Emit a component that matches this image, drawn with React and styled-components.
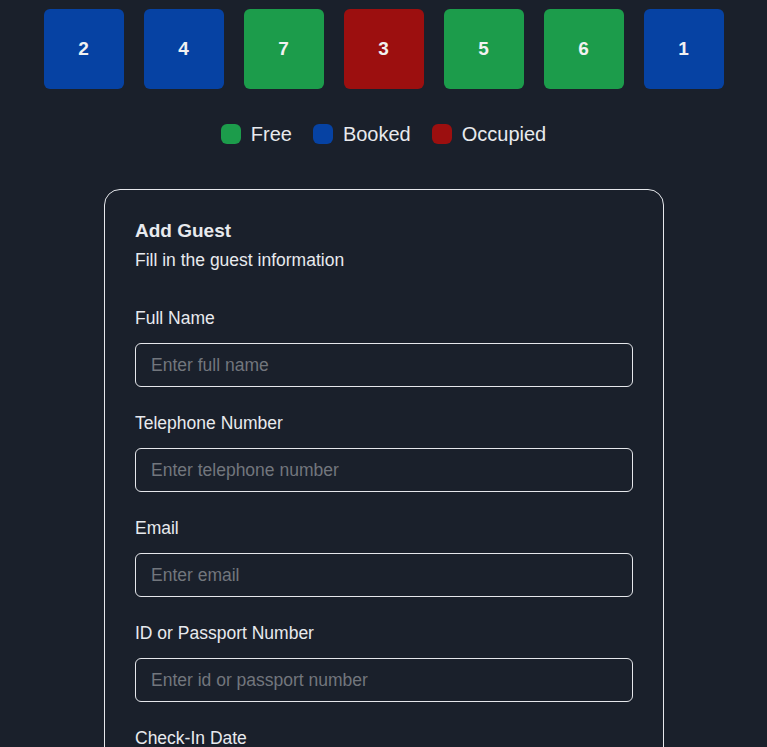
import React from 'react'
import styled, { createGlobalStyle } from 'styled-components'

const GlobalStyle = createGlobalStyle`
    html, body {
        margin: 0;
        padding: 0;
        background-color: #1a202b;
        font-family: "Liberation Sans", Arial, sans-serif;
        color: #e8eaee;
    }
`;

const colors = {
    free: '#1c9c4b',
    booked: '#0642a3',
    occupied: '#9c0f0f',
}

const rooms = [
    { number: 2, status: 'booked' },
    { number: 4, status: 'booked' },
    { number: 7, status: 'free' },
    { number: 3, status: 'occupied' },
    { number: 5, status: 'free' },
    { number: 6, status: 'free' },
    { number: 1, status: 'booked' },
]

const fields = [
    { label: 'Full Name', placeholder: 'Enter full name' },
    { label: 'Telephone Number', placeholder: 'Enter telephone number' },
    { label: 'Email', placeholder: 'Enter email' },
    { label: 'ID or Passport Number', placeholder: 'Enter id or passport number' },
    { label: 'Check-In Date', placeholder: 'Select date' },
]

const App = () => {

    return (
        <Page>
            <GlobalStyle />
            <Rooms>
                {rooms.map((room) => (
                    <Room key={room.number} $status={room.status}>{room.number}</Room>
                ))}
            </Rooms>
            <Legend>
                <LegendItem><Dot $status='free' />Free</LegendItem>
                <LegendItem><Dot $status='booked' />Booked</LegendItem>
                <LegendItem><Dot $status='occupied' />Occupied</LegendItem>
            </Legend>
            <Card>
                <Title>Add Guest</Title>
                <Subtitle>Fill in the guest information</Subtitle>
                <Form>
                    {fields.map((field) => (
                        <Field key={field.label}>
                            <Label>{field.label}</Label>
                            <Input placeholder={field.placeholder} />
                        </Field>
                    ))}
                </Form>
            </Card>
        </Page>
    )
}

export default App

const Page = styled.div`
    display: flex;
    flex-direction: column;
    align-items: center;
    padding-top: 9px;
`;

const Rooms = styled.div`
    display: flex;
    gap: 20px;
`;

const Room = styled.div`
    width: 80px;
    height: 80px;
    border-radius: 6px;
    background-color: ${({ $status }) => colors[$status]};
    display: flex;
    align-items: center;
    justify-content: center;
    font-size: 19px;
    font-weight: 700;
    color: #f1f1f1;
    cursor: pointer;
`;

const Legend = styled.div`
    display: flex;
    gap: 21px;
    margin-top: 35px;
    height: 20px;
    align-items: center;
`;

const LegendItem = styled.div`
    display: flex;
    align-items: center;
    gap: 10px;
    font-size: 20px;
`;

const Dot = styled.span`
    width: 20px;
    height: 20px;
    border-radius: 6px;
    background-color: ${({ $status }) => colors[$status]};
`;

const Card = styled.div`
    box-sizing: border-box;
    width: 560px;
    margin-top: 45px;
    margin-left: 1px;
    padding: 30px 30px 40px;
    border: 1px solid #e5e7eb;
    border-radius: 16px;
`;

const Title = styled.h2`
    margin: 0;
    font-size: 19px;
    line-height: 21px;
    font-weight: 700;
`;

const Subtitle = styled.p`
    margin: 9px 0 0;
    font-size: 17.5px;
    line-height: 20px;
`;

const Form = styled.div`
    display: flex;
    flex-direction: column;
    gap: 26px;
    margin-top: 38px;
`;

const Field = styled.div`
    display: flex;
    flex-direction: column;
    gap: 15px;
`;

const Label = styled.label`
    font-size: 17.5px;
    line-height: 20px;
`;

const Input = styled.input`
    box-sizing: border-box;
    width: 100%;
    height: 44px;
    padding: 0 15px;
    border: 1px solid #e5e7eb;
    border-radius: 6px;
    background: transparent;
    color: #e8eaee;
    font-family: "Liberation Sans", Arial, sans-serif;
    font-size: 17.5px;
    outline: none;

    &::placeholder {
        color: #72767d;
    }
`;
